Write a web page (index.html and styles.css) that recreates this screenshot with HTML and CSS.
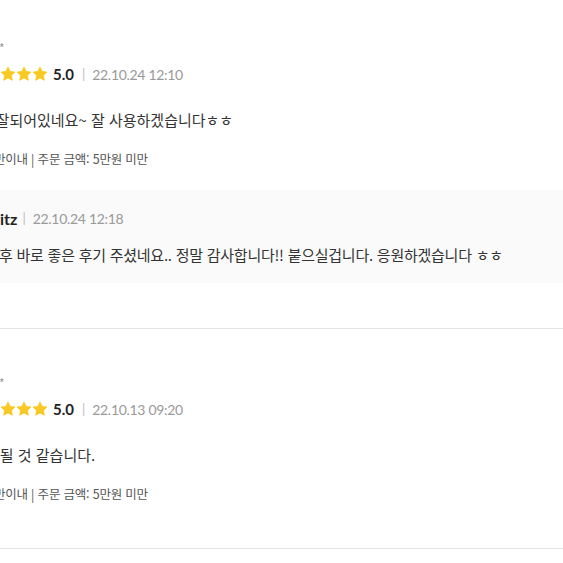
FILE: index.html
```html
<!DOCTYPE html>
<html lang="ko">
<head>
    <meta charset="UTF-8">
    <title>상품 후기</title>
    <link rel="stylesheet" href="styles.css">
</head>
<body>
    <ul class="review-list">
        <li class="review">
            <div class="writer">김민 **</div>
            <div class="rating">
                <span class="stars">
                    <svg viewBox="0 0 24 24"><path d="M12 1.5l3.2 6.6 7.2 1-5.2 5.1 1.2 7.2L12 18l-6.4 3.4 1.2-7.2L1.6 9.1l7.2-1z"/></svg>
                    <svg viewBox="0 0 24 24"><path d="M12 1.5l3.2 6.6 7.2 1-5.2 5.1 1.2 7.2L12 18l-6.4 3.4 1.2-7.2L1.6 9.1l7.2-1z"/></svg>
                    <svg viewBox="0 0 24 24"><path d="M12 1.5l3.2 6.6 7.2 1-5.2 5.1 1.2 7.2L12 18l-6.4 3.4 1.2-7.2L1.6 9.1l7.2-1z"/></svg>
                    <svg viewBox="0 0 24 24"><path d="M12 1.5l3.2 6.6 7.2 1-5.2 5.1 1.2 7.2L12 18l-6.4 3.4 1.2-7.2L1.6 9.1l7.2-1z"/></svg>
                    <svg viewBox="0 0 24 24"><path d="M12 1.5l3.2 6.6 7.2 1-5.2 5.1 1.2 7.2L12 18l-6.4 3.4 1.2-7.2L1.6 9.1l7.2-1z"/></svg>
                </span>
                <span class="score">5.0</span>
                <span class="bar">|</span>
                <span class="date">22.10.24 12:10</span>
            </div>
            <p class="text">포장잘되어있네요~ 잘 사용하겠습니다ㅎㅎ</p>
            <p class="meta">한달 반이내 | 주문 금액: 5만원 미만</p>
            <div class="reply">
                <div class="reply-head">
                    <span class="seller">Moritz</span>
                    <span class="bar">|</span>
                    <span class="date">22.10.24 12:18</span>
                </div>
                <p class="reply-text">구매 후 바로 좋은 후기 주셨네요.. 정말 감사합니다!! 붙으실겁니다. 응원하겠습니다 ㅎㅎ</p>
            </div>
        </li>
        <li class="review">
            <div class="writer">이수 **</div>
            <div class="rating">
                <span class="stars">
                    <svg viewBox="0 0 24 24"><path d="M12 1.5l3.2 6.6 7.2 1-5.2 5.1 1.2 7.2L12 18l-6.4 3.4 1.2-7.2L1.6 9.1l7.2-1z"/></svg>
                    <svg viewBox="0 0 24 24"><path d="M12 1.5l3.2 6.6 7.2 1-5.2 5.1 1.2 7.2L12 18l-6.4 3.4 1.2-7.2L1.6 9.1l7.2-1z"/></svg>
                    <svg viewBox="0 0 24 24"><path d="M12 1.5l3.2 6.6 7.2 1-5.2 5.1 1.2 7.2L12 18l-6.4 3.4 1.2-7.2L1.6 9.1l7.2-1z"/></svg>
                    <svg viewBox="0 0 24 24"><path d="M12 1.5l3.2 6.6 7.2 1-5.2 5.1 1.2 7.2L12 18l-6.4 3.4 1.2-7.2L1.6 9.1l7.2-1z"/></svg>
                    <svg viewBox="0 0 24 24"><path d="M12 1.5l3.2 6.6 7.2 1-5.2 5.1 1.2 7.2L12 18l-6.4 3.4 1.2-7.2L1.6 9.1l7.2-1z"/></svg>
                </span>
                <span class="score">5.0</span>
                <span class="bar">|</span>
                <span class="date">22.10.13 09:20</span>
            </div>
            <p class="text">도움 될 것 같습니다.</p>
            <p class="meta">한달 반이내 | 주문 금액: 5만원 미만</p>
        </li>
    </ul>
</body>
</html>
```

FILE: styles.css
```css
*{
    margin: 0;
    padding: 0;
}
ul, ol{
    list-style: none;
}
body{
    background: #ffffff;
    font-family: "Noto Sans CJK KR", "Noto Sans", sans-serif;
    overflow: hidden;
}
.review-list{
    margin: -6px 0 0 -32px;
}
.review{
    padding: 45px 0 45px 0;
    border-bottom: 1px solid #e4e4e4;
}
.writer{
    height: 18px;
    line-height: 18px;
    font-size: 12px;
    color: #999999;
}
.rating{
    display: flex;
    align-items: center;
    height: 20px;
    margin-top: 7px;
}
.stars{
    display: flex;
    margin-right: 5px;
}
.stars svg{
    width: 16px;
    height: 16px;
    fill: #f7c922;
    stroke: #f7c922;
    stroke-width: 1.2;
    stroke-linejoin: round;
}
.score{
    font-family: Lato, sans-serif;
    font-weight: bold;
    font-size: 15px;
    color: #222222;
}
.bar{
    font-family: Lato, sans-serif;
    font-size: 13px;
    color: #bbbbbb;
    margin: 0 7px 0 8px;
}
.date{
    font-family: Lato, sans-serif;
    font-size: 14px;
    letter-spacing: -0.3px;
    color: #999999;
}
.text{
    margin-top: 25px;
    line-height: 22px;
    font-size: 15px;
    color: #333333;
}
.meta{
    margin-top: 19px;
    line-height: 18px;
    font-size: 12.5px;
    letter-spacing: -0.2px;
    color: #555555;
}
.reply{
    margin: 22px 0 0 -20px;
    padding: 18px 0 17px 20px;
    background: #fafafa;
}
.reply-head{
    display: flex;
    align-items: center;
    height: 20px;
    padding-left: 2px;
}
.seller{
    font-family: Lato, sans-serif;
    font-weight: bold;
    font-size: 16px;
    color: #222222;
}
.reply-head .bar{
    margin: 0 7px 0 5px;
}
.reply-text{
    margin-top: 16px;
    line-height: 22px;
    font-size: 15px;
    letter-spacing: -0.25px;
    color: #333333;
    white-space: nowrap;
}
```
